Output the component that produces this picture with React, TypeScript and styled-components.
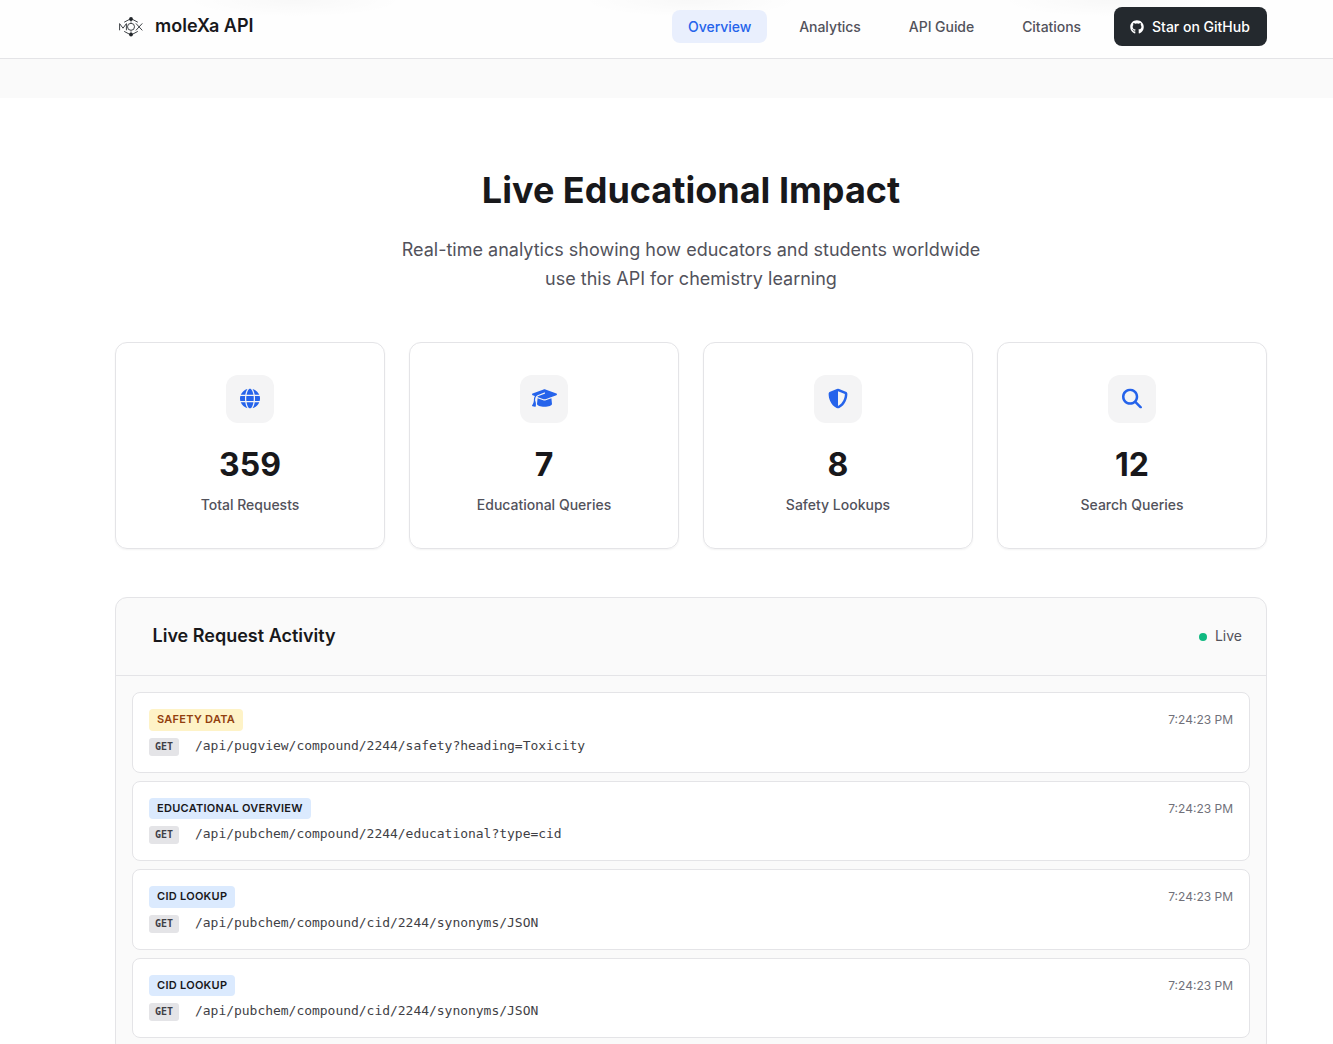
import React from "react";
import styled, { createGlobalStyle } from "styled-components";
import { FaGithub, FaGlobe, FaGraduationCap, FaShieldHalved, FaMagnifyingGlass } from "react-icons/fa6";

const GlobalStyle = createGlobalStyle`
  *, *::before, *::after { box-sizing: border-box; }
  html, body { margin: 0; padding: 0; }
  body {
    font-family: Inter, "Liberation Sans", sans-serif;
    font-size: 16px;
    line-height: 1.6;
    color: #18181b;
    background: #fff;
    -webkit-font-smoothing: antialiased;
  }
`;

const Page = styled.div`
  height: 1044px;
  width: 100%;
  overflow: hidden;
  background: #fff;
`;

const Header = styled.header`
  height: 59px;
  border-bottom: 1px solid #e4e4e7;
  background:
    radial-gradient(ellipse 110px 17px at 295px 0, rgba(0, 0, 0, 0.025), transparent),
    radial-gradient(ellipse 110px 17px at 690px 0, rgba(0, 0, 0, 0.025), transparent),
    radial-gradient(ellipse 110px 17px at 1110px 0, rgba(0, 0, 0, 0.025), transparent),
    #fefefe;
`;

const Container = styled.div`
  width: 1152px;
  margin-left: 115px;
`;

const NavBar = styled(Container)`
  height: 53px;
  display: flex;
  align-items: center;
  justify-content: space-between;
`;

const Brand = styled.div`
  display: flex;
  align-items: center;
  gap: 8px;
  font-size: 18px;
  font-weight: 600;
  line-height: 28px;
  padding-bottom: 1px;
`;

const Links = styled.nav`
  display: flex;
  align-items: center;
  gap: 16px;
`;

const NavLink = styled.a<{ $active?: boolean }>`
  height: 33px;
  padding: 0 16px;
  border-radius: 8px;
  line-height: 34px;
  font-size: 14px;
  font-weight: 500;
  letter-spacing: -0.05px;
  color: ${(p) => (p.$active ? "#2563eb" : "#52525b")};
  background: ${(p) => (p.$active ? "#e9effd" : "transparent")};
`;

const GithubButton = styled.a`
  display: flex;
  align-items: center;
  gap: 8px;
  width: 153px;
  height: 39px;
  margin-left: 1px;
  padding: 1px 16px 0;
  border-radius: 8px;
  background: #24292e;
  color: #fff;
  font-size: 14px;
  font-weight: 500;
  white-space: nowrap;
`;

const Strip = styled.div`
  height: 39px;
  background: #fafafa;
`;

const Intro = styled.div`
  padding-top: 63px;
  text-align: center;
`;

const Title = styled.h2`
  margin: 0;
  font-size: 36px;
  font-weight: 700;
  line-height: 58px;
`;

const Lead = styled.p`
  margin: 17px auto 0;
  width: 600px;
  font-size: 18px;
  line-height: 28.8px;
  color: #52525b;
`;

const Stats = styled.div`
  display: grid;
  grid-template-columns: repeat(4, 1fr);
  gap: 24px;
  margin-top: 48px;
`;

const StatCard = styled.div`
  height: 207px;
  padding-top: 32px;
  border: 1px solid #e4e4e7;
  border-radius: 12px;
  box-shadow: 0 1px 2px rgba(0, 0, 0, 0.05);
  display: flex;
  flex-direction: column;
  align-items: center;
`;

const IconTile = styled.div`
  width: 48px;
  height: 48px;
  border-radius: 12px;
  background: #f4f4f5;
  color: #2563eb;
  display: flex;
  align-items: center;
  justify-content: center;

  svg {
    transform: translateY(-0.4px);
  }
`;

const StatValue = styled.div`
  margin-top: 24px;
  font-size: 32px;
  font-weight: 700;
  line-height: 36px;
`;

const StatLabel = styled.div`
  margin-top: 11px;
  font-size: 14px;
  font-weight: 500;
  line-height: 22px;
  color: #52525b;
`;

const Panel = styled.section`
  margin-top: 48px;
  border: 1px solid #e4e4e7;
  border-radius: 12px;
  background: #fafafa;
`;

const PanelHeader = styled.div`
  display: flex;
  align-items: center;
  justify-content: space-between;
  height: 78px;
  padding: 0 24px 0 36.5px;
  border-bottom: 1px solid #e4e4e7;
`;

const PanelTitle = styled.h3`
  margin: 0;
  font-size: 18px;
  font-weight: 600;
`;

const LiveStatus = styled.div`
  display: flex;
  align-items: center;
  gap: 8px;
  font-size: 14px;
  line-height: 22px;
  color: #52525b;
  &::before {
    content: "";
    width: 8px;
    height: 8px;
    margin-top: 2px;
    border-radius: 50%;
    background: #10b981;
  }
`;

const RequestList = styled.div`
  display: flex;
  flex-direction: column;
  gap: 8px;
  padding: 16.8px 16px 16px;
`;

const RequestRow = styled.article`
  height: 80.5px;
  padding: 16px;
  border: 1px solid #e4e4e7;
  border-radius: 8px;
  background: #fff;
`;

const RowTop = styled.div`
  display: flex;
  align-items: flex-start;
  justify-content: space-between;
  height: 21.5px;
`;

const Tag = styled.span<{ $tone: "safety" | "info" }>`
  height: 21.5px;
  padding: 0 8px;
  border-radius: 4px;
  font-size: 11px;
  font-weight: 600;
  line-height: 21px;
  letter-spacing: 0.275px;
  text-transform: uppercase;
  color: ${(p) => (p.$tone === "safety" ? "#92400e" : "#18181b")};
  background: ${(p) => (p.$tone === "safety" ? "#fef3c7" : "#dbeafe")};
`;

const Time = styled.time`
  font-size: 12px;
  line-height: 22px;
  color: #71717a;
`;

const RowBottom = styled.div`
  display: flex;
  align-items: center;
  gap: 16px;
  margin-top: 7px;
  height: 18px;
  font-family: "DejaVu Sans Mono", monospace;
`;

const Method = styled.span`
  width: 30px;
  height: 18px;
  border-radius: 3px;
  background: #e4e4e7;
  color: #3f3f46;
  font-size: 10px;
  font-weight: 700;
  line-height: 18px;
  text-align: center;
`;

const Path = styled.code`
  font-family: inherit;
  font-size: 13px;
  line-height: 18px;
  letter-spacing: -0.026px;
  padding-bottom: 2px;
  color: #3f3f46;
`;

const Logo = () => (
  <svg width="32" height="32" viewBox="0 0 32 32" fill="none" stroke="#3f4347" strokeWidth="1">
    <path d="M16 8.6 22.8 12.2M16 8.6 9.2 12.2M9.2 21.4 16 25 22.8 21.4" />
    <path d="M4.6 20.3V13.6l3.4 4.6 3.4-4.6v6.7M20.9 13.4l6.4 7M27.3 13.4l-6.4 7" />
    <circle cx="16" cy="16.8" r="3.5" />
    <path d="M16 9v4M16 20.4V24" strokeWidth="0.6" />
    <circle cx="16" cy="9" r="1.9" fill="#202428" stroke="none" />
    <circle cx="16" cy="24.5" r="1.9" fill="#202428" stroke="none" />
  </svg>
);

const navItems = ["Overview", "Analytics", "API Guide", "Citations"];

const stats = [
  { Icon: FaGlobe, size: 20, value: 359, label: "Total Requests" },
  { Icon: FaGraduationCap, size: 25, value: 7, label: "Educational Queries" },
  { Icon: FaShieldHalved, size: 20, value: 8, label: "Safety Lookups" },
  { Icon: FaMagnifyingGlass, size: 20, value: 12, label: "Search Queries" },
];

const requests: { tag: string; tone: "safety" | "info"; path: string }[] = [
  { tag: "Safety Data", tone: "safety", path: "/api/pugview/compound/2244/safety?heading=Toxicity" },
  { tag: "Educational Overview", tone: "info", path: "/api/pubchem/compound/2244/educational?type=cid" },
  { tag: "CID Lookup", tone: "info", path: "/api/pubchem/compound/cid/2244/synonyms/JSON" },
  { tag: "CID Lookup", tone: "info", path: "/api/pubchem/compound/cid/2244/synonyms/JSON" },
];

export default function App() {
  return (
    <Page>
      <GlobalStyle />
      <Header>
        <NavBar>
          <Brand>
            <Logo />
            moleXa API
          </Brand>
          <Links>
            {navItems.map((item, i) => (
              <NavLink key={item} $active={i === 0}>{item}</NavLink>
            ))}
            <GithubButton>
              <FaGithub size={14} />
              Star on GitHub
            </GithubButton>
          </Links>
        </NavBar>
      </Header>
      <Strip />
      <Container as="main">
        <Intro>
          <Title>Live Educational Impact</Title>
          <Lead>
            Real-time analytics showing how educators and students worldwide use this API for chemistry learning
          </Lead>
        </Intro>
        <Stats>
          {stats.map(({ Icon, size, value, label }) => (
            <StatCard key={label}>
              <IconTile><Icon size={size} /></IconTile>
              <StatValue>{value}</StatValue>
              <StatLabel>{label}</StatLabel>
            </StatCard>
          ))}
        </Stats>
        <Panel>
          <PanelHeader>
            <PanelTitle>Live Request Activity</PanelTitle>
            <LiveStatus>Live</LiveStatus>
          </PanelHeader>
          <RequestList>
            {requests.map((r, i) => (
              <RequestRow key={i}>
                <RowTop>
                  <Tag $tone={r.tone}>{r.tag}</Tag>
                  <Time>7:24:23 PM</Time>
                </RowTop>
                <RowBottom>
                  <Method>GET</Method>
                  <Path>{r.path}</Path>
                </RowBottom>
              </RequestRow>
            ))}
          </RequestList>
        </Panel>
      </Container>
    </Page>
  );
}
